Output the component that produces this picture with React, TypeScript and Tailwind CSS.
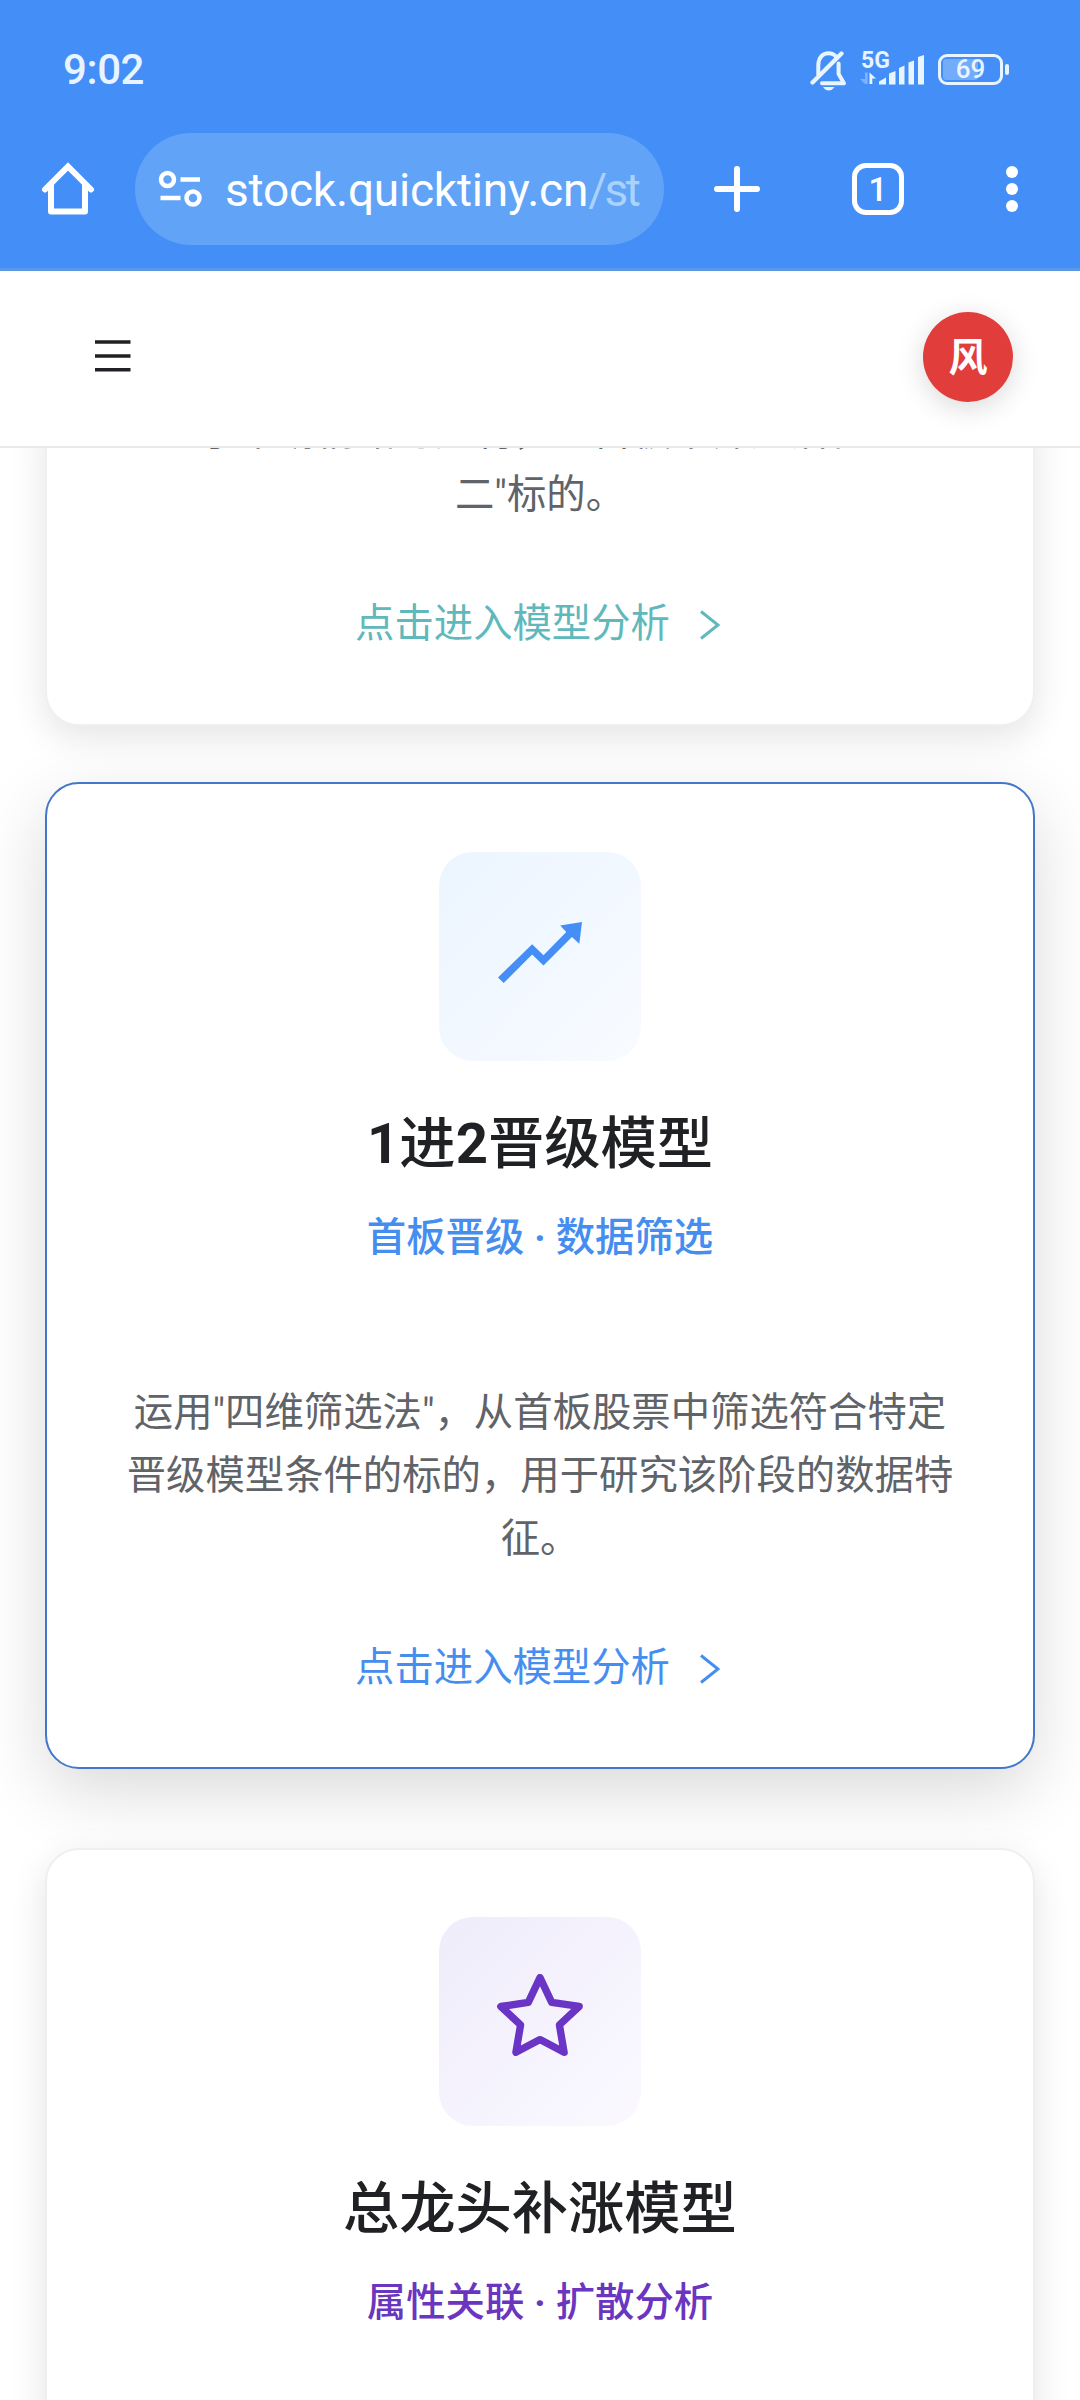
import type { ReactNode } from 'react'

interface ModelCardProps {
  className: string
  accent: string
  icon?: ReactNode
  title?: ReactNode
  subtitle?: [string, string]
  lines?: string[]
}

function StatusBar() {
  return (
    <div className="flex h-[133px] items-start justify-between pr-[71px] pl-[63px] text-[#e8f4ff]">
      <span className="mt-[45px] text-[42px] leading-[50px] font-medium tracking-[-0.4px]">9:02</span>
      <div className="mt-[50px] flex items-start">
        <svg className="h-[41px] w-[37px]" viewBox="0 0 37 41" fill="none" stroke="currentColor">
          <path d="M8.3 25V15C8.3 7.500 12.800 3.200 18.500 3.200C22 3.200 24.800 4.700 26.600 7.200M28.600 13.500V24L34 33.200H12" strokeWidth="4" strokeLinejoin="round" strokeLinecap="round" />
          <path d="M2.500 32.500L31.500 3.500" strokeWidth="4.200" strokeLinecap="round" />
          <path d="M13 37H24.500Q22 40.500 18.700 40.500Q15.500 40.500 13 37Z" fill="currentColor" stroke="none" />
        </svg>
        <div className="ml-[13px] h-[41px] w-[66px]">
          <span className="block h-[20px] pt-[1px] pl-[1px] text-[23px] leading-[20px] font-bold">5G</span>
          <svg className="-mt-[17px] h-[33px] w-[66px]" viewBox="0 0 66 33" fill="currentColor">
            <path d="M5 19.500H7.700V31H5L0 26H5Z" opacity=".35" />
            <path d="M9.500 31V19.500L16 25.500H12.300V31Z" />
            <path d="M19 28.500L26 24.500V31.500H19Z" />
            <path d="M29 20.500L35.500 18V31.500H29Z" />
            <path d="M39 15L44.500 12.500V31.500H39Z" />
            <path d="M48.500 9.500L54 7.500V31.500H48.500Z" />
            <path d="M58 4L64 2V31.500H58Z" />
          </svg>
        </div>
        <div className="mt-[4px] ml-[12px] flex items-center">
          <div className="grid h-[31px] w-[65px] rounded-[9px] border-[3.500px] border-current p-[2px]">
            <div className="col-start-1 row-start-1 w-[35px] rounded-[3px] bg-[#73acfb]" />
            <span className="col-start-1 row-start-1 text-center text-[26px] leading-[21px] font-medium">69</span>
          </div>
          <div className="ml-[2px] h-[11px] w-[4px] rounded-full bg-current" />
        </div>
      </div>
    </div>
  )
}

function AddressBar() {
  return (
    <div className="flex h-[112px] items-center text-white">
      <svg className="ml-[41px] h-[54px] w-[54px]" viewBox="0 0 54 54" fill="none" stroke="currentColor" strokeWidth="6" strokeLinejoin="round" strokeLinecap="round">
        <path d="M4 27.500L27 4.500L50 27.500" strokeLinejoin="miter" />
        <path d="M10 23V49.500H44V23" />
      </svg>
      <div className="ml-[40px] flex h-[112px] w-[529px] items-center rounded-full bg-[#61a3f7]">
        <svg className="ml-[23px] h-[38px] w-[44px]" viewBox="0 0 44 38" fill="none" stroke="currentColor" strokeWidth="4.500">
          <circle cx="9.500" cy="9.500" r="6.500" />
          <path d="M22.500 9.500H42M2.500 28H22.500" />
          <circle cx="35" cy="28" r="6.500" />
        </svg>
        <div className="mt-[2px] ml-[23px] w-[416px] overflow-hidden text-[46px] leading-[60px] tracking-[-0.200px] whitespace-nowrap">
          stock.quicktiny.cn<span className="tracking-[-2.600px] text-[#a9d2fc]">/str</span>
        </div>
      </div>
      <svg className="ml-[49px] h-[48px] w-[48px]" viewBox="0 0 48 48" stroke="currentColor" strokeWidth="6" strokeLinecap="round">
        <path d="M24 4V44M4 24H44" />
      </svg>
      <div className="ml-[91px] flex h-[52px] w-[52px] items-center justify-center rounded-[14px] border-[5.500px] border-white pt-[1px] text-[33px] leading-none font-medium">
        1
      </div>
      <svg className="ml-[102px] h-[48px] w-[12px]" viewBox="0 0 12 48" fill="currentColor">
        <circle cx="6" cy="7" r="6" />
        <circle cx="6" cy="24" r="6" />
        <circle cx="6" cy="41" r="6" />
      </svg>
    </div>
  )
}

function SiteHeader() {
  return (
    <header className="flex h-[177px] items-center justify-between border-b-2 border-[#e8e8ed] bg-white pr-[67px] pb-[3px] pl-[95px]">
      <svg className="mb-[2px] h-[34px] w-[36px]" viewBox="0 0 36 34" stroke="#202124" strokeWidth="3.500">
        <path d="M0 3H35.500M0 17H35.500M0 30.700H35.500" />
      </svg>
      <div className="flex h-[90px] w-[90px] items-center justify-center rounded-full bg-[#e13d3b] pt-[3px] text-[39px] font-bold text-white shadow-[0_6px_28px_rgba(0,0,0,0.15)]">
        风
      </div>
    </header>
  )
}

function RiseIcon() {
  return (
    <svg className="h-[61px] w-[84px]" viewBox="0 0 251 182" fill="#458ef6">
      <path d="M0 166L102 66L136 99L204 30L186 10L251 0L243 65L221 45L136 130L102 97L17 182Z" />
    </svg>
  )
}

function StarIcon() {
  return (
    <svg className="h-[82px] w-[86px]" viewBox="0 0 256 245" fill="none" stroke="#6a35c4" strokeWidth="22" strokeLinejoin="round">
      <path d="M128 11L163 85L245 97L186 152L200 234L128 196L56 234L70 152L11 97L93 85Z" />
    </svg>
  )
}

function ModelCard({ className, accent, icon, title, subtitle, lines }: ModelCardProps) {
  return (
    <section className={`flex shrink-0 flex-col items-center rounded-[34px] border-2 bg-white text-center ${className}`}>
      {icon}
      {title && <h2 className="mt-[44px] text-[56.250px] leading-[79px] font-medium text-[#202124]">{title}</h2>}
      {subtitle && (
        <p className={`mt-[23px] text-[39.375px] leading-[62px] font-medium ${accent}`}>
          {subtitle[0]} <span className="font-bold">·</span> {subtitle[1]}
        </p>
      )}
      {lines && (
        <>
          <div className={`text-[39.375px] leading-[63px] whitespace-nowrap text-[#606368] ${title ? 'mt-[112px]' : ''}`}>
            {lines.map((line) => (
              <p key={line}>{line}</p>
            ))}
          </div>
          <a className={`mt-[67px] mr-[5px] flex items-center text-[39.375px] leading-[62px] ${accent}`}>
            点击进入模型分析
            <svg className="mt-[2px] ml-[30px] h-[30px] w-[20px]" viewBox="0 0 20 30" fill="none" stroke="currentColor" strokeWidth="3">
              <path d="M1 1.500L18 15L1 28.500" />
            </svg>
          </a>
        </>
      )}
    </section>
  )
}

export default function App() {
  return (
    <div className="flex h-[2400px] w-[1080px] flex-col overflow-hidden bg-white font-[Roboto,'Noto_Sans_CJK_SC',sans-serif]">
      <div className="h-[271px] shrink-0 border-b-[3px] border-[#5b98e6] bg-[#448ef7]">
        <StatusBar />
        <AddressBar />
      </div>
      <SiteHeader />
      <main className="flex min-h-0 flex-1 flex-col overflow-hidden px-[45px]">
        <ModelCard
          className="-mt-[50px] h-[328px] border-[#f0f0f0] shadow-[0_11px_36px_rgba(0,0,0,0.11)]"
          accent="text-[#5fb9bc]"
          lines={['基于市场情绪与题材，从首板中筛选潜在"龙', '二"标的。']}
        />
        <ModelCard
          className="mt-[56px] h-[987px] border-[#4377c9] pt-[68px] shadow-[0_22px_68px_rgba(0,0,0,0.15)]"
          accent="text-[#458ef0]"
          icon={
            <div className="flex h-[209px] w-[202px] shrink-0 items-center justify-center rounded-[34px] bg-linear-135 from-[#ecf5ff] to-[#f8fbff] pb-[8px]">
              <RiseIcon />
            </div>
          }
          title={
            <>
              <b className="font-bold">1</b>进<b className="font-bold">2</b>晋级模型
            </>
          }
          subtitle={['首板晋级', '数据筛选']}
          lines={[
            '运用"四维筛选法"，从首板股票中筛选符合特定',
            '晋级模型条件的标的，用于研究该阶段的数据特',
            '征。',
          ]}
        />
        <ModelCard
          className="mt-[79px] h-[987px] border-[#efefef] pt-[67px] shadow-[0_11px_36px_rgba(0,0,0,0.11)]"
          accent="text-[#6a35bf]"
          icon={
            <div className="flex h-[209px] w-[202px] shrink-0 items-center justify-center rounded-[34px] bg-linear-135 from-[#efecfb] to-[#fbf9ff] pb-[13px]">
              <StarIcon />
            </div>
          }
          title="总龙头补涨模型"
          subtitle={['属性关联', '扩散分析']}
        />
      </main>
    </div>
  )
}
